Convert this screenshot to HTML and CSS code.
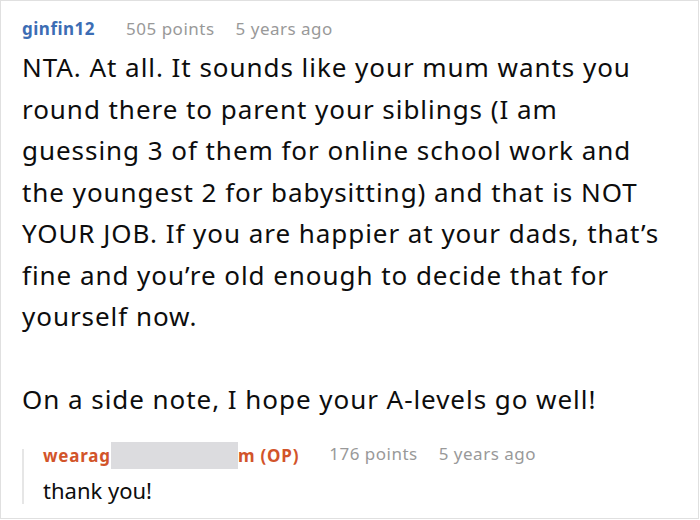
FILE: index.html
```html
<html>
  <head>
    <meta name="viewport" content="width=device-width, initial-scale=1">
    <link rel="stylesheet" href="styles.css">
  </head>
  <body>
    <div class="comment">
      <div class="meta">
        <span class="author">ginfin12</span>
        <span class="info">505 points</span>
        <span class="info">5 years ago</span>
      </div>
      <div class="text">
        <p>NTA. At all. It sounds like your mum wants you round there to parent your siblings (I am guessing 3 of them for online school work and the youngest 2 for babysitting) and that is NOT YOUR JOB. If you are happier at your dads, that’s fine and you’re old enough to decide that for yourself now.</p>
        <p>On a side note, I hope your A-levels go well!</p>
      </div>
      <div class="reply">
        <div class="thread-line"></div>
        <div class="reply-body">
          <div class="meta">
            <span class="author op">wearag<span class="hidden"></span>m (OP)</span>
            <span class="info">176 points</span>
            <span class="info">5 years ago</span>
          </div>
          <div class="reply-text">thank you!</div>
        </div>
      </div>
    </div>
  </body>
</html>
```

FILE: styles.css
```css
* {
  box-sizing: border-box;
}

body {
  margin: 0;
  background: #fff;
  font-family: "Noto Sans", "Open Sans", sans-serif;
}

.comment {
  width: 699px;
  height: 519px;
  border: 1px solid #e0e0e0;
  padding: 16px 36px 0 21px;
}

.meta {
  display: flex;
  gap: 21px;
  font-size: 17px;
  line-height: 24px;
  letter-spacing: 0.5px;
}

.author {
  font-weight: bold;
  color: #3c6db4;
  margin-right: 10px;
}

.author.op {
  color: #d2542a;
  letter-spacing: 0.8px;
  margin-right: 9px;
}

.hidden {
  display: inline-block;
  width: 127px;
  height: 27px;
  background: #dcdcdf;
  vertical-align: -7px;
}

.info {
  color: #999;
}

.text {
  margin-top: 6px;
  font-size: 26px;
  line-height: 41.5px;
  letter-spacing: 0.95px;
  color: #0d0d0d;
}

.text p {
  margin: 0 0 41.5px 0;
}

/* reply sits right under the last paragraph */
.text p:last-child {
  margin-bottom: 0;
}

.reply {
  display: flex;
  margin-top: 21px;
}

.thread-line {
  width: 2px;
  margin: 7px 0 4px 0;
  background: #e6e6e6;
}

.reply-body {
  padding-left: 19px;
}

.reply-text {
  margin-top: 3px;
  font-size: 22px;
  line-height: 36px;
  color: #0d0d0d;
}
```
